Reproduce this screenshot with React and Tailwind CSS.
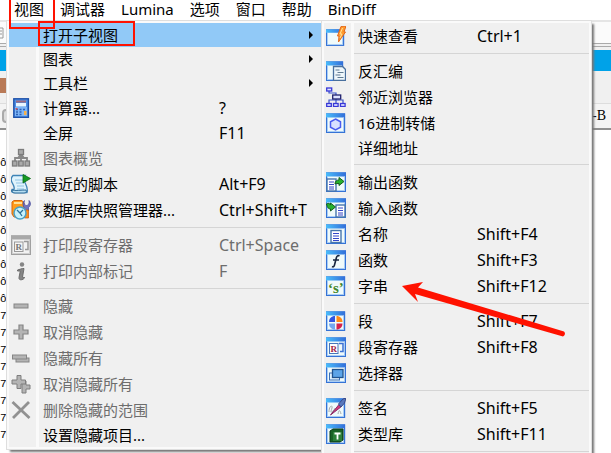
import clsx from "clsx";

const menus = ["视图", "调试器", "Lumina", "选项", "窗口", "帮助", "BinDiff"];

const addresses = [
  "ô", "ô", "ô", "ô", "ô", "ô", "ô", "ô", "ô",
  "7", "7", "7", "7", "7", "7", "7", "7",
];

const viewItems = [
  { label: "打开子视图", submenu: true, active: true },
  { label: "图表", submenu: true },
  { label: "工具栏", submenu: true },
  { label: "计算器...", keys: "?", icon: "calc" },
  { label: "全屏", keys: "F11" },
  { label: "图表概览", icon: "overview", disabled: true },
  { label: "最近的脚本", keys: "Alt+F9", icon: "script" },
  { label: "数据库快照管理器...", keys: "Ctrl+Shift+T", icon: "snapshot" },
  null,
  { label: "打印段寄存器", keys: "Ctrl+Space", icon: "regsGray", disabled: true },
  { label: "打印内部标记", keys: "F", icon: "info", disabled: true },
  null,
  { label: "隐藏", icon: "minus", disabled: true },
  { label: "取消隐藏", icon: "plus", disabled: true },
  { label: "隐藏所有", icon: "minusAll", disabled: true },
  { label: "取消隐藏所有", icon: "plusAll", disabled: true },
  { label: "删除隐藏的范围", icon: "cross", disabled: true },
  { label: "设置隐藏项目..." },
];

const subviewItems = [
  { label: "快速查看", keys: "Ctrl+1", icon: "quick" },
  null,
  { label: "反汇编", icon: "disasm" },
  { label: "邻近浏览器", icon: "proximity" },
  { label: "16进制转储", icon: "hex" },
  { label: "详细地址" },
  null,
  { label: "输出函数", icon: "exports" },
  { label: "输入函数", icon: "imports" },
  { label: "名称", keys: "Shift+F4", icon: "names" },
  { label: "函数", keys: "Shift+F3", icon: "func" },
  { label: "字串", keys: "Shift+F12", icon: "strings" },
  null,
  { label: "段", keys: "Shift+F7", icon: "segments" },
  { label: "段寄存器", keys: "Shift+F8", icon: "regs" },
  { label: "选择器", icon: "selectors" },
  null,
  { label: "签名", keys: "Shift+F5", icon: "signatures" },
  { label: "类型库", keys: "Shift+F11", icon: "types" },
  null,
];

const Win = ({ w = 18, gray }) => (
  <>
    <rect x="0.5" y="1" width={w} height="18.5" fill={gray ? "#f2f2f2" : "#f0fafa"} stroke={gray ? "#a0a0a0" : "#3573d6"} strokeWidth="1.4" />
    <rect x="0" y="0.5" width={w + 1} height="4" fill={gray ? "#a8a8a8" : "url(#titlebar)"} />
    <path d={`M1.5 4.500v14h${w - 2}v-14`} fill="none" stroke={gray ? "#cfcfcf" : "#a9cdf5"} />
  </>
);

const Page = ({ x, y, w = 9, h = 12 }) => (
  <>
    <rect x={x} y={y} width={w} height={h} fill="#fff" stroke="#4776ad" strokeWidth="1.4" />
    <path
      d={`M${x + 2} ${y + 3}h${w - 4}M${x + 2} ${y + 5.5}h${w - 4}M${x + 2} ${y + 8}h${w - 4}M${x + 2} ${y + 10}h${w - 4}`}
      stroke="#3447c8"
      strokeWidth="1.2"
    />
  </>
);

const icons = {
  calc: (
    <>
      <rect x="2.8" y="0.8" width="14.6" height="18.6" fill="#4e8fe6" stroke="#1d50a8" strokeWidth="1.4" />
      <path d="M5 2.500h10v2H5z" fill="#a06a7e" />
      <path d="M5 5h10v3.500H5z" fill="#e9f6ff" />
      <path d="M4 9h12v9H4z" fill="#7db4f6" />
      <path d="M5 11.5h2m1.5 0h2m1.5 0h2M5 14h2m1.5 0h2M5 16.5h2m1.5 0h2" stroke="#2c61b5" strokeWidth="1.4" />
      <path d="M4.5 10.8h2" stroke="#e05050" strokeWidth="1.5" />
      <path d="M13 13h2.5v4H13z" fill="#f4b04c" />
    </>
  ),
  overview: (
    <>
      <path d="M10 6v7M4 13v-3h12v3M10 6l-3 4M10 6l3 4" stroke="#888" strokeWidth="1.8" fill="none" />
      <g fill="#aaa" stroke="#7c7c7c" strokeWidth="1.3">
        <rect x="7.5" y="1.5" width="5" height="5" />
        <rect x="1.5" y="13" width="4.5" height="5" />
        <rect x="7.7" y="13" width="4.5" height="5" />
        <rect x="14" y="13" width="4.5" height="5" />
      </g>
    </>
  ),
  script: (
    <>
      <path d="M2 1.5h12c-2 2-1 5 0 7s3 7 2 10H3c-2 0-3-1-2-3h2c1-3-1-5-2-7s-1-5 1-7z" fill="#dff3fc" stroke="#3e83b6" strokeWidth="1.3" />
      <path d="M4 6h8M5 9h8M6 12h7M6 15h7" stroke="#8fc4e4" strokeWidth="1.2" />
      <path d="M1 16c3 1 9 0 14 0 1 2 0 3-2 3H4c-2 0-3-1-3-3z" fill="#b6def2" stroke="#2d6b98" />
      <path d="M12 0.5l7.5 4-7.5 4.500z" fill="#159a22" stroke="#0b6a16" strokeWidth="0.8" />
    </>
  ),
  snapshot: (
    <>
      <path d="M1 2l2-1.500h8L13 3v14H3L1 14z" fill="#ff9c1c" stroke="#d9640a" />
      <path d="M3 3h8" stroke="#ffe09a" strokeWidth="2" />
      <path d="M13.500 0.500c-1 3 0 5 2 5s3-2 2.500-5c2 2 2 5-.5 7v3h-4V8c-2-2-2-6 0-7.500z" fill="#7173be" stroke="#44479a" strokeWidth="0.7" />
      <path d="M13.500 10h4v8h-4z" fill="#ff8b16" stroke="#c65908" strokeWidth="0.7" />
      <circle cx="9" cy="13" r="6" fill="#c8f2fb" stroke="#4aa0c6" strokeWidth="1.5" />
      <path d="M6 10l3 3 3-3M9 13l2 3" stroke="#2d7199" strokeWidth="1.300" fill="none" />
    </>
  ),
  regsGray: (
    <>
      <Win w={19} gray />
      <path d="M13 6.500h4v8h-3" fill="none" stroke="#999" strokeWidth="1.5" />
      <rect x="3.500" y="7" width="8.500" height="9.500" fill="#f5f5f5" stroke="#999" />
      <text x="4.500" y="15" fontSize="9" fontWeight="bold" fontFamily="Liberation Serif, serif" fill="#777">R</text>
    </>
  ),
  info: (
    <>
      <circle cx="11" cy="3.500" r="2.200" fill="#858585" />
      <path d="M6.500 9l5-1.500h1.500L11.500 16c0 1 .5 1 1.500 0l.5 1c-2 2.500-6 2.500-5.500-.5L9.300 10H6.500z" fill="#858585" stroke="#6c6c6c" />
    </>
  ),
  minus: <rect x="3" y="8" width="14" height="4" fill="#b4b4b4" stroke="#858585" />,
  plus: <path d="M8 3h4v5h5v4h-5v5H8v-5H3V8h5z" fill="#b4b4b4" stroke="#858585" strokeWidth="1.200" />,
  minusAll: (
    <g fill="#b4b4b4" stroke="#858585">
      <rect x="5" y="10" width="13" height="4" />
      <rect x="1.500" y="7" width="14" height="4" />
    </g>
  ),
  plusAll: (
    <g fill="#b4b4b4" stroke="#7e7e7e">
      <path d="M11 7h4v4h4v4h-4v4h-4z" />
      <path d="M6 1.500h4V6h4.500v4H10v4.500H6V10H1V6h5z" />
    </g>
  ),
  cross: <path d="M1.500 2l17 16M18 2L2 18" stroke="#919191" strokeWidth="2.800" />,
  quick: (
    <>
      <g transform="translate(0 3) scale(1 .84)"><Win w={17} /></g>
      <path d="M15 0.500l5-.5-2 6h1.500L12.500 16l.5-6h-1.500z" fill="#ff9a2d" stroke="#e2681a" />
      <path d="M16.500 2l-2.500 6h2L14 12" fill="none" stroke="#ffe297" />
    </>
  ),
  disasm: (
    <>
      <Win w={16} />
      <path d="M7.500 5.500h9l3 3v11h-12z" fill="#eef7fb" stroke="#486f9d" strokeWidth="1.300" />
      <path d="M9.500 9h4M11.500 11.500h6M9.500 14h5M11.500 16.500h6" stroke="#607b92" strokeWidth="1.200" />
    </>
  ),
  proximity: (
    <>
      <path d="M3 4v2h7v11M3 16v-3h14v3" fill="none" stroke="#3b54c9" strokeWidth="1.200" />
      <g fill="#dce1ff" stroke="#3838d8" strokeWidth="1.300">
        <rect x="0.700" y="1" width="5" height="3" />
        <rect x="0.700" y="16.500" width="4.600" height="3" />
        <rect x="7.500" y="16.500" width="4.600" height="3" />
        <rect x="14.500" y="16.500" width="4.600" height="3" />
        <rect x="6.700" y="8" width="8" height="4" stroke="#20206e" />
      </g>
    </>
  ),
  hex: (
    <>
      <Win />
      <path d="M9.500 6l5 2.800v5.400l-5 2.800-5-2.800V8.800z" fill="#d8e0ff" stroke="#4b5cf0" strokeWidth="1.500" />
    </>
  ),
  exports: (
    <>
      <Win w={19} />
      <Page x={1} y={7} />
      <path d="M9 12c0-3 2-4 4-4V5.500l5 4-5 4V11.500c-1.500 0-3 0-4 .5z" fill="#26b12e" stroke="#175c20" />
    </>
  ),
  imports: (
    <>
      <Win w={19} />
      <Page x={10} y={7} />
      <path d="M0.500 6c2-1 3-1 4 1V5l5 4-5 4v-2c-2 0-3-1-4-5z" fill="#26b12e" stroke="#175c20" />
    </>
  ),
  names: (
    <>
      <Win w={19} />
      <Page x={5} y={6.500} w={10} />
    </>
  ),
  func: (
    <>
      <Win w={19} />
      <path d="M13.500 6c-1.500-1-2.700 0-3.200 2L8.500 15c-.4 1.700-1.200 2.300-2.500 1.500M7 10h6" fill="none" stroke="#17263f" strokeWidth="1.600" />
    </>
  ),
  strings: (
    <>
      <Win />
      <text x="2" y="17" fontSize="15" fontWeight="bold" fontFamily="Liberation Serif, serif" fill="#43872b">‘s’</text>
    </>
  ),
  segments: (
    <>
      <Win />
      <path d="M9 5v6H3c0-3.500 2.500-6 6-6z" fill="#3155e2" />
      <path d="M10.500 5v6h6c0-3.500-2.500-6-6-6z" fill="#ff8a17" />
      <path d="M9 12.500v6c-3.500 0-6-2.500-6-6z" fill="#74a8f2" />
      <path d="M10.500 12.500v6c3.500 0 6-2.500 6-6z" fill="#d6224d" />
    </>
  ),
  regs: (
    <>
      <Win w={19} />
      <path d="M13 6.500h4v8h-3" fill="none" stroke="#3b70d3" strokeWidth="1.500" />
      <rect x="3.500" y="6.500" width="8.500" height="10" fill="#fff" stroke="#4776ba" />
      <text x="4.500" y="15" fontSize="9" fontWeight="bold" fontFamily="Liberation Serif, serif" fill="#a32546">R</text>
    </>
  ),
  selectors: (
    <>
      <Win w={19} />
      <rect x="3.500" y="10" width="10" height="7" fill="#e1f3ff" stroke="#3c70b5" />
      <rect x="6.500" y="6.500" width="10.500" height="8" fill="#5ca4e8" stroke="#20538e" strokeWidth="1.300" />
    </>
  ),
  signatures: (
    <>
      <Win />
      <path d="M3 14c0-7 4-7 3-4s-2 6 1 3 2-4 2-1M12 16c1-5 2-4 3 0" fill="none" stroke="#a7abad" />
      <path d="M4.500 17L13 6.500l2.500 2z" fill="#d2397b" stroke="#8b2b68" />
      <path d="M12.500 6L17 1l3-1-1.500 5L15 9z" fill="#5878bd" stroke="#394987" />
    </>
  ),
  types: (
    <>
      <Win />
      <path d="M4 7l3-2h10v11l-3 2H4z" fill="#1a6226" stroke="#0b3b16" />
      <path d="M7 8h9v9H7z" fill="#2c7f39" />
      <path d="M8.500 9.500h6M11.500 9.500v6" stroke="#fff" strokeWidth="1.800" />
    </>
  ),
};

function Icon({ name }) {
  return (
    <svg viewBox="0 0 20 20" className="size-5" aria-hidden="true">
      {icons[name]}
    </svg>
  );
}

function MenuRow({ item, labelWidth }) {
  if (!item) {
    return (
      <div role="separator" className="flex h-[9px]">
        <div className="w-[27px]" />
        <div className="w-[3px] bg-[#fafafa]" />
        <div className="mt-1 h-px flex-1 bg-[#d5d5d5]" />
      </div>
    );
  }

  return (
    <button
      role="menuitem"
      disabled={item.disabled}
      className={clsx(
        "flex w-full items-center text-left whitespace-nowrap",
        item.icon ? "h-[26px]" : "h-6",
        item.active && "bg-[#91c9f7]",
        item.disabled && "text-[#6d6d6d]"
      )}
    >
      <span className="w-[27px] pl-[2px]">{item.icon && <Icon name={item.icon} />}</span>
      <span className={clsx("mr-1 w-[3px] self-stretch", !item.active && "bg-[#fafafa]")} />
      <span className={labelWidth}>{item.label}</span>
      <span className="flex-1 text-base">{item.keys}</span>
      {item.submenu && (
        <svg viewBox="0 0 4 8" className="mr-2 h-2 w-1" aria-hidden="true">
          <path d="M0 0l4 4-4 4z" fill="#000" />
        </svg>
      )}
    </button>
  );
}

function Menu({ items, labelWidth, className, label }) {
  return (
    <div
      role="menu"
      aria-label={label}
      className={clsx(
        "absolute border border-[#dedede] bg-[#f0f0f0] outline-2 -outline-offset-3 outline-[#fafafa] p-[2px] shadow-[3px_3px_2px_-1px_#777]",
        className
      )}
    >
      {items.map((item, i) => (
        <MenuRow key={i} item={item} labelWidth={labelWidth} />
      ))}
    </div>
  );
}

export default function App() {
  return (
    <div className="relative h-screen overflow-hidden bg-white font-['Noto_Sans','Noto_Sans_CJK_SC',sans-serif] text-[15px] leading-5 text-black">
      <svg className="absolute size-0" aria-hidden="true">
        <defs>
          <linearGradient id="titlebar">
            <stop stopColor="#49bdfb" />
            <stop offset="1" stopColor="#326ed9" />
          </linearGradient>
        </defs>
      </svg>

      <nav className="flex h-5 items-start gap-4 pl-[14px] leading-[18px]">
        {menus.map((name) => (
          <button key={name} className="whitespace-nowrap">{name}</button>
        ))}
      </nav>

      {/* toolbars behind the menu */}
      <div className="h-[30px] border-t-2 border-[#e5e5e5] bg-[#f0f0f0]">
        <div className="flex h-[22px] items-center border-b border-[#aaa] bg-[#fbfbfb]">
          <svg viewBox="0 0 6 12" className="h-3 w-[6px]" aria-hidden="true">
            <path d="M0 1h3v10H0M0 4h2M0 7h2" fill="none" stroke="#999" />
          </svg>
        </div>
        <div className="mt-[2px] h-px bg-[#aaa]" />
      </div>
      <div className="h-[21px] bg-[#00a2e8]" />
      <div className="h-8 bg-[#f0f0f0] pt-[7px]">
        <div className="h-[15px] w-[7px] bg-[#b97a57]" />
      </div>
      <div className="flex h-[27px] items-center justify-between border-t border-b-2 border-t-[#ddd] border-b-[#909090] bg-[#f4f4f4] pr-[5px]">
        <div className="ml-[2px] h-[14px] w-3 rounded-sm border-2 border-[#aaa] bg-[#ddd]" />
        <span className="font-['Liberation_Serif',serif] text-sm">-B</span>
      </div>
      <div className="pt-[25px] font-['Liberation_Mono',monospace] text-[11px] leading-[17px]">
        {addresses.map((text, i) => (
          <div key={i}>{text}</div>
        ))}
      </div>

      <Menu items={viewItems} label="视图" labelWidth="w-[176px]" className="top-5 left-[6px] w-[318px]" />
      <Menu items={subviewItems} label="打开子视图" labelWidth="w-[119px]" className="top-5 left-[321px] w-[271px]" />

      <div className="pointer-events-none absolute -top-1 left-[9px] h-[33px] w-[46px] border-2 border-[#ff1200]" />
      <div className="pointer-events-none absolute top-[21px] left-[38px] h-[25px] w-[97px] border-2 border-[#ff1200]" />
      <svg viewBox="0 0 170 60" className="pointer-events-none absolute top-[280px] left-[400px] h-[60px] w-[170px]" aria-hidden="true">
        <path d="M2 6L23 2L18 7.500L164 51.500A3 3 0 0 1 163 56.500L15 14L18 22z" fill="#ff1200" />
      </svg>
    </div>
  );
}
